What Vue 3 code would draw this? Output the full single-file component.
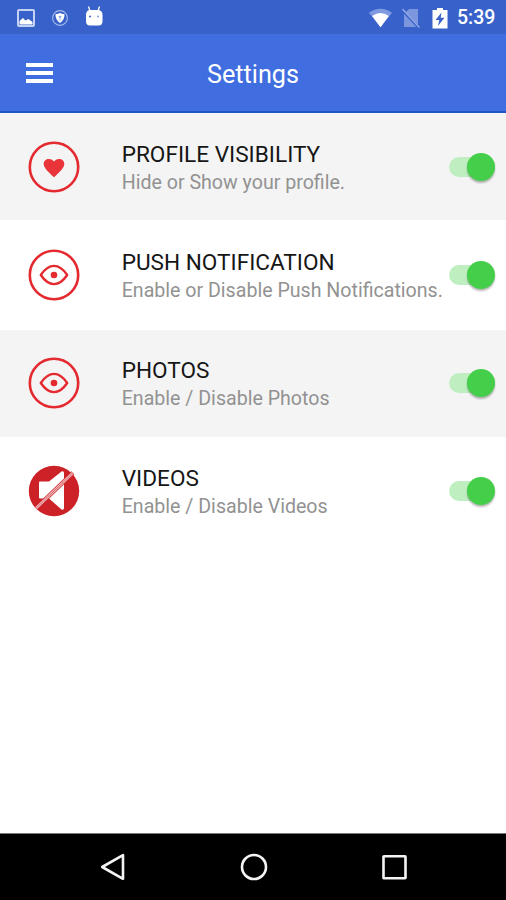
<script setup>
import { ref } from 'vue'

const items = ref([
  { icon: 'heart', title: 'PROFILE VISIBILITY', text: 'Hide or Show your profile.', on: true },
  { icon: 'eye', title: 'PUSH NOTIFICATION', text: 'Enable or Disable Push Notifications.', on: true },
  { icon: 'eye', title: 'PHOTOS', text: 'Enable / Disable Photos', on: true },
  { icon: 'mute', title: 'VIDEOS', text: 'Enable / Disable Videos', on: true },
])

function toggle(item) {
  item.on = !item.on
}
</script>

<template>
  <div class="screen">
    <div class="status-bar">
      <div class="status-left">
        <svg width="18" height="18" viewBox="0 0 18 18">
          <rect x="1" y="1" width="16" height="16" rx="1" fill="none" stroke="#c3d1f4" stroke-width="2" />
          <path d="M2.500 15.500V12L6 9L8.500 11.500L11.500 10L15.500 13V15.500Z" fill="#fff" />
        </svg>
        <svg width="18" height="18" viewBox="0 0 18 18">
          <circle cx="9" cy="9" r="7.4" fill="none" stroke="#a9bcec" stroke-width="1.1" />
          <path d="M9 4C11 5 12.500 5 13.500 5C13.700 9 12 12 9 14C6 12 4.300 9 4.500 5C5.500 5 7 5 9 4Z" fill="#fff" />
          <path d="M7.400 7.500Q9 5.800 10.600 7.500L9 9.500Z" fill="#8ba4e3" />
          <path d="M9 8V12" stroke="#8ba4e3" stroke-width="0.800" />
        </svg>
        <svg width="20" height="20" viewBox="0 0 20 20">
          <path d="M4.500 0.500L6 5M15.500 0.500L14 5" stroke="#fff" stroke-width="1.300" />
          <path d="M5 4H15Q18.500 5 18.500 9V15Q18.500 19.500 14.500 19.500H6Q2 19.500 2 15V9Q2 5 5 4Z" fill="#fff" />
          <circle cx="6" cy="10.500" r="1" fill="#3862c9" />
          <circle cx="14" cy="10.500" r="0.900" fill="#7b96dd" />
        </svg>
      </div>
      <div class="status-right">
        <svg width="25" height="20" viewBox="0 0 26 20">
          <path d="M1 4.500Q13 -3.500 25 4.500L13 19.500Z" fill="#7f9ae0" />
          <path d="M4.300 8Q13 1.500 21.700 8L13 19.500Z" fill="#fff" />
        </svg>
        <svg class="sim" width="20" height="21" viewBox="0 0 20 21">
          <path d="M8 1H17V19H3V6Z" fill="#7c97de" />
          <path d="M0.500 1.500L18.500 20.500" stroke="#3862c9" stroke-width="2.500" />
          <path d="M1.500 1L18.500 19.500" stroke="#8fa7e6" stroke-width="1.500" />
        </svg>
        <svg class="battery" width="16" height="21" viewBox="0 0 16 21">
          <path d="M5 0H11V2H15.500V20.500H0.500V2H5Z" fill="#fff" />
          <path d="M9.500 4.500L3.500 12H7.300L6 18L12.500 9.800H8.700Z" fill="#3862c9" />
        </svg>
        <span class="clock">5:39</span>
      </div>
    </div>

    <header class="app-bar">
      <button class="menu" aria-label="Menu">
        <span></span>
        <span></span>
        <span></span>
      </button>
      <h1>Settings</h1>
    </header>

    <main class="list">
      <div v-for="item in items" :key="item.title" class="row">
        <svg class="row-icon" width="52" height="52" viewBox="0 0 52 52">
          <template v-if="item.icon === 'mute'">
            <circle cx="26" cy="26" r="25.200" fill="#cc2127" />
            <path d="M12 16.500H21L33.500 6.500Q36 5.500 36 8V43Q36 45.500 33.500 44.500L21 33.500H12Q11 33.500 11 32.500V17.500Q11 16.500 12 16.500Z" fill="#fff" />
            <path d="M8 43.200L45 7.800" stroke="#cc2127" stroke-width="4.200" />
            <path d="M8 43.200L45 7.800" stroke="#f0babd" stroke-width="2.600" />
            <path d="M8 43.200L45 7.800" stroke="#d8565b" stroke-width="0.800" />
          </template>
          <template v-else>
            <circle cx="26" cy="26" r="24.200" fill="none" stroke="#e4292f" stroke-width="2.600" />
            <path
              v-if="item.icon === 'heart'"
              d="M26 36.300C20.500 31 15.700 27 15.700 22.700C15.700 17.800 22.500 16 26 20.500C29.500 16 36.300 17.800 36.300 22.700C36.300 27 31.500 31 26 36.300Z"
              fill="#e9343a"
            />
            <template v-else>
              <path
                d="M12.800 26C16.500 20.500 20.500 16.900 26 16.900S35.500 20.500 39.200 26C35.500 31.500 31.500 35.100 26 35.100S16.500 31.500 12.800 26Z"
                fill="none"
                stroke="#e4292f"
                stroke-width="2.400"
                stroke-linejoin="round"
              />
              <circle cx="26" cy="26" r="3.300" fill="#e4292f" />
            </template>
          </template>
        </svg>
        <div class="row-text">
          <h2>{{ item.title }}</h2>
          <p>{{ item.text }}</p>
        </div>
        <button class="switch" :class="{ on: item.on }" :aria-label="item.title" @click="toggle(item)">
          <span class="thumb"></span>
        </button>
      </div>
    </main>

    <nav class="nav-bar">
      <svg width="28" height="28" viewBox="0 0 28 28">
        <path d="M3.200 14L24 2.200V25.800Z" />
      </svg>
      <svg width="28" height="28" viewBox="0 0 28 28">
        <circle cx="14" cy="14" r="12" />
      </svg>
      <svg width="28" height="28" viewBox="0 0 28 28">
        <rect x="3.500" y="3.200" width="22" height="22" rx="0.500" />
      </svg>
    </nav>
  </div>
</template>

<style>
body {
  margin: 0;
}
</style>

<style scoped>
.screen {
  display: flex;
  flex-direction: column;
  width: 506px;
  height: 900px;
  overflow: hidden;
  background: #fff;
  font-family: Roboto, "Noto Sans", sans-serif;
}

svg {
  display: block;
  flex: none;
}

button {
  padding: 0;
  border: none;
  background: none;
  cursor: pointer;
}

.status-bar {
  display: flex;
  justify-content: space-between;
  box-sizing: border-box;
  height: 34px;
  padding: 0 11px 0 16.5px;
  background: #3862c9;
}

.status-left {
  display: flex;
  align-items: center;
  gap: 16px;
  height: 35px;
}

.status-left svg:last-child {
  margin: -3px 0 0 -1px;
}

.status-right {
  display: flex;
  align-items: center;
  height: 36px;
}

.sim {
  margin-left: 8px;
}

.battery {
  margin-left: 11px;
}

.clock {
  width: 38px;
  margin-left: 9px;
  color: #fff;
  font-size: 19.5px;
  font-weight: 500;
  line-height: 38px;
  white-space: nowrap;
}

.app-bar {
  display: grid;
  grid-template-columns: 80px 1fr 80px;
  align-items: center;
  box-sizing: border-box;
  height: 79px;
  border-bottom: 2px solid #1f55c9;
  background: #406ee0;
}

.menu {
  display: flex;
  flex-direction: column;
  gap: 4px;
  width: 27px;
  margin: 1px 0 0 26px;
}

.menu span {
  height: 4px;
  background: #fff;
}

.app-bar h1 {
  margin: 5px 0 0;
  color: #fff;
  font-size: 25.2px;
  font-weight: 400;
  line-height: 30px;
  text-align: center;
}

.list {
  display: flex;
  flex: 1;
  flex-direction: column;
  gap: 1.3px;
}

.row {
  display: flex;
  align-items: center;
  box-sizing: border-box;
  height: 107px;
  padding: 0 11px 0 27.7px;
}

.row:nth-child(odd) {
  background: #f4f4f4;
}

.row-text {
  flex: 1;
  margin: 3px 0 0 42px;
  white-space: nowrap;
}

.row-text h2 {
  margin: 0;
  color: #161616;
  font-size: 22.6px;
  font-weight: 400;
  line-height: 29px;
}

.row-text p {
  margin: 0;
  color: #929292;
  font-size: 19.6px;
  font-weight: 400;
  line-height: 28px;
}

.switch {
  display: flex;
  flex: none;
  align-items: center;
  width: 46px;
  height: 20px;
  border-radius: 10px;
  background: #ccc;
}

.switch.on {
  justify-content: flex-end;
  background: linear-gradient(90deg, #bfefc1 36px, transparent 36px);
}

.thumb {
  width: 28px;
  height: 28px;
  flex: none;
  border-radius: 50%;
  background: #f1f1f1;
  box-shadow: 0 2px 2px rgba(0, 0, 0, 0.28);
}

.on .thumb {
  background: #45ce49;
}

.nav-bar {
  display: flex;
  justify-content: center;
  align-items: center;
  gap: 112.5px;
  box-sizing: border-box;
  height: 67px;
  padding-left: 1px;
  border-top: 1px solid #777;
  background: #000;
}

.nav-bar svg {
  fill: none;
  stroke: #f4f4f4;
  stroke-width: 2.6;
  stroke-linejoin: round;
}
</style>
